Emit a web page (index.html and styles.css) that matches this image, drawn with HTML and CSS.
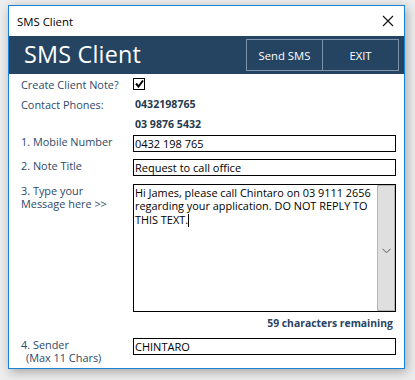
FILE: index.html
```html
<!DOCTYPE html>
<html>
<head>
<meta charset="utf-8">
<link rel="stylesheet" href="styles.css">
</head>
<body>
<div class="window">
  <div class="titlebar">
    <span class="title">SMS Client</span>
    <svg class="close" width="12" height="12" viewBox="0 0 12 12"><path d="M1 1 L11 11 M11 1 L1 11" stroke="#111" stroke-width="1.1" fill="none"/></svg>
  </div>
  <div class="header">
    <div class="brand">SMS Client</div>
    <div class="buttons">
      <div class="btn send">Send SMS</div>
      <div class="btn exit">EXIT</div>
    </div>
  </div>
  <div class="content">
    <div class="row r-check">
      <div class="label">Create Client Note?</div>
      <div class="checkbox"><svg width="9" height="9" viewBox="0 0 9 9"><path d="M1 4.5 L3.5 7.5 L8 1.5" stroke="#000" stroke-width="2" fill="none"/></svg></div>
    </div>
    <div class="row r-phone">
      <div class="label">Contact Phones:</div>
      <div class="value">0432198765</div>
    </div>
    <div class="row r-phone2">
      <div class="label"></div>
      <div class="value">03 9876 5432</div>
    </div>
    <div class="row r-input r-mobile">
      <div class="label">1. Mobile Number</div>
      <div class="field">0432 198 765</div>
    </div>
    <div class="row r-input r-title">
      <div class="label">2. Note Title</div>
      <div class="field">Request to call office</div>
    </div>
    <div class="row r-msg">
      <div class="label"><div class="ln">3. Type your</div><div class="ln">Message here &gt;&gt;</div></div>
      <div class="textarea">
        <div class="text">Hi James, please call Chintaro on 03 9111 2656 regarding your application. DO NOT REPLY TO THIS TEXT.<span class="caret"></span></div>
        <div class="scroll"><svg width="9" height="6" viewBox="0 0 9 6"><path d="M0.5 0.8 L4.5 4.8 L8.5 0.8" stroke="#555" stroke-width="1" fill="none"/></svg></div>
      </div>
    </div>
    <div class="remaining">59 characters remaining</div>
    <div class="row r-input r-sender">
      <div class="label"><div class="ln">4. Sender</div><div class="ln sub">(Max 11 Chars)</div></div>
      <div class="field">CHINTARO</div>
    </div>
  </div>
</div>
</body>
</html>
```

FILE: styles.css
```css
html, body {
  margin: 0;
  padding: 0;
}
body {
  background: #ededed;
  width: 415px;
  height: 380px;
  overflow: hidden;
  font-family: "Open Sans", "Noto Sans", sans-serif;
}
.window {
  margin: 5px 0 0 8px;
  width: 395px;
  height: 362px;
  border: 1px solid #1883d7;
  background: #fff;
  box-shadow: 2px 3px 10px rgba(0,0,0,0.3);
  display: flex;
  flex-direction: column;
}
.titlebar {
  height: 30px;
  display: flex;
  align-items: center;
  justify-content: space-between;
  padding: 0 10px 0 8px;
  flex: none;
}
.title {
  font-size: 11.4px;
  color: #000;
}
.close {
  display: block;
}
.header {
  height: 38px;
  background: #254461;
  display: flex;
  justify-content: space-between;
  align-items: flex-start;
  padding: 0 5px 0 15px;
  flex: none;
}
.brand {
  color: #fff;
  font-size: 23.4px;
  line-height: 36px;
  letter-spacing: 0.2px;
}
.buttons {
  display: flex;
  margin-top: 3px;
  border: 1px solid #8095ab;
}
.btn {
  width: 75px;
  height: 30px;
  display: flex;
  align-items: center;
  justify-content: center;
  color: #fff;
  font-size: 11.3px;
}
.btn.send {
  border-right: 1px solid #8095ab;
}
.content {
  padding: 0 8px 0 12px;
  display: flex;
  flex-direction: column;
  color: #2d4968;
  font-size: 10.9px;
}
.row {
  display: grid;
  grid-template-columns: 112px 1fr;
  align-items: center;
}
.r-check { height: 20px; }
.r-phone { height: 20px; }
.r-phone2 { height: 19px; margin-bottom: 2px; }
.value {
  font-weight: 700;
  color: #283a4d;
  padding-left: 2px;
  font-size: 10.6px;
}
.checkbox {
  width: 10px;
  height: 10px;
  border: 1px solid #000;
  display: flex;
  align-items: center;
  justify-content: center;
  margin-top: -1px;
}
.checkbox svg { display: block; }
.r-input {
  align-items: start;
}
.r-input .label {
  line-height: 13px;
}
.field {
  height: 15px;
  border: 1px solid #000;
  color: #000;
  font-size: 11px;
  line-height: 15px;
  padding-left: 1px;
  white-space: nowrap;
  overflow: hidden;
}
.r-title { margin-top: 7px; }
.r-msg {
  margin-top: 8px;
  align-items: start;
}
.r-msg .label {
  padding-top: 1px;
}
.ln {
  height: 12.5px;
  line-height: 12.5px;
}
.textarea {
  height: 126px;
  border: 1px solid #000;
  display: flex;
}
.text {
  flex: 1;
  color: #000;
  font-size: 10.9px;
  line-height: 13.3px;
  padding: 1px 2px 0 1px;
}
.caret {
  display: inline-block;
  width: 1px;
  height: 13px;
  background: #000;
  vertical-align: -3px;
}
.scroll {
  width: 16px;
  background: #dfdfdf;
  border: 1px solid #b5b5b5;
  display: flex;
  align-items: center;
  justify-content: center;
}
.scroll svg { display: block; margin-top: 6px; }
.remaining {
  text-align: right;
  font-weight: 700;
  color: #2a4362;
  font-size: 10.4px;
  height: 22px;
  line-height: 22px;
  padding-right: 3px;
}
.r-sender { margin-top: 4px; }
.r-sender .label { padding-top: 0; }
.r-sender .ln { height: 13px; line-height: 13px; }
.sub { padding-left: 5px; }
```
